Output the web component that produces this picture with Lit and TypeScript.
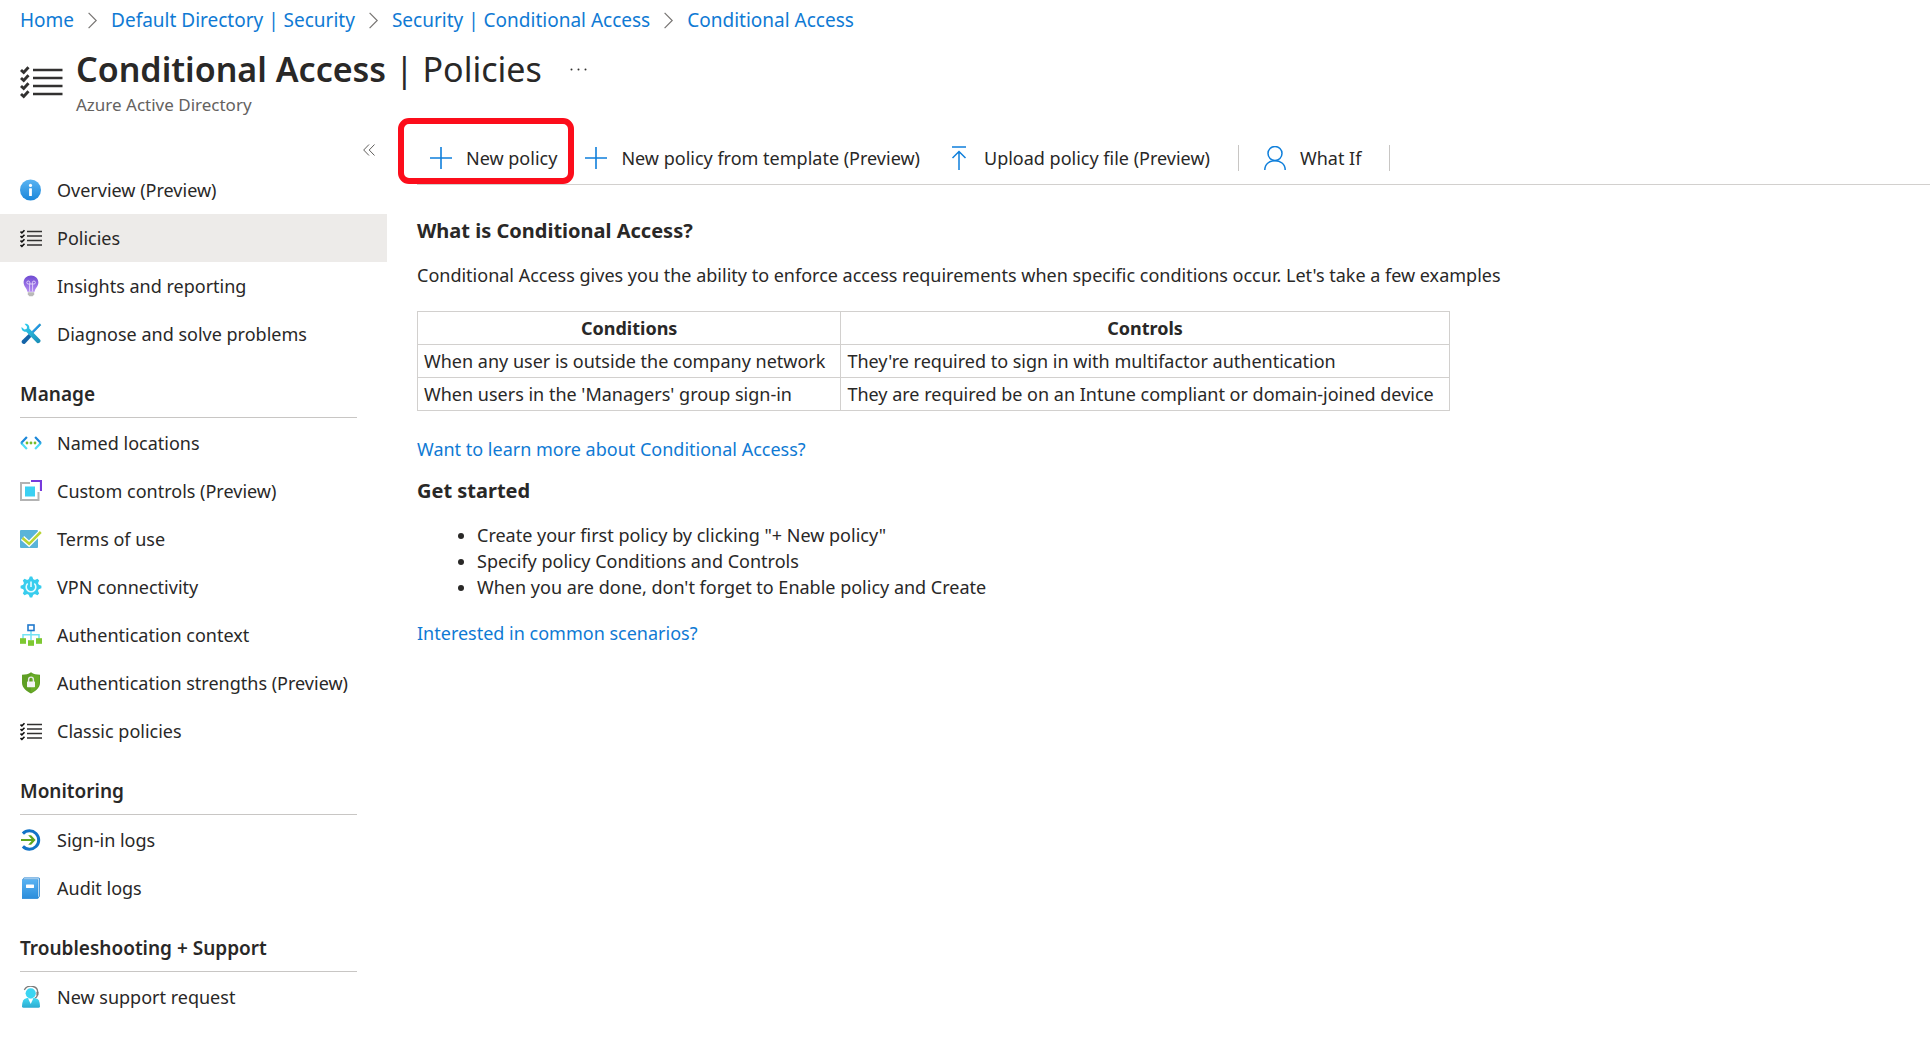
import { LitElement, html, css, svg, nothing, TemplateResult, SVGTemplateResult } from "lit";
import { customElement, property, state } from "lit/decorators.js";

const checklist = svg`
  <path d="M7 4.500H22M7 9H22M7 13.500H22M7 18H22" stroke="#323130" stroke-width="1.500" fill="none" />
  <path d="M.5 4.500 1.900 5.800 4.500 3.200M.5 9 1.900 10.300 4.500 7.700M.5 13.500 1.900 14.800 4.500 12.200M.5 18 1.900 19.300 4.500 16.700" stroke="#111" stroke-width="1.600" fill="none" />`;

/* All navigation glyphs share a 22 x 22 grid. */
const icons: Record<string, SVGTemplateResult> = {
  info: svg`
    <defs><linearGradient id="g" x2="0" y2="1"><stop offset="0" stop-color="#5ab4f2" /><stop offset="1" stop-color="#1a86da" /></linearGradient></defs>
    <circle cx="10.5" cy="11" r="10.5" fill="url(#g)" />
    <circle cx="10.5" cy="6.4" r="1.6" fill="#fff" />
    <rect x="9.1" y="9.2" width="2.8" height="7.8" rx=".6" fill="#fff" />`,
  checklist,
  bulb: svg`
    <defs><linearGradient id="g" x2="0" y2="1"><stop offset="0" stop-color="#6f4bd2" /><stop offset="1" stop-color="#b48af2" /></linearGradient></defs>
    <path d="M11 .6c4.200 0 7.400 3.100 7.400 7 0 3.900-3.300 5.600-3.800 9.200H7.400C6.900 13.200 3.600 11.500 3.600 7.600c0-3.900 3.200-7 7.400-7z" fill="url(#g)" />
    <path d="M9.600 16.500V9H8.300a1.500 1.500 0 1 1 1.500-1.500V9h2.600V7.500A1.500 1.500 0 1 1 13.900 9h-1.300v7.500" fill="none" stroke="#e6d9fb" stroke-width=".9" />
    <path d="M7.800 17.200h6.400v2.300l-1.500 1.700H9.300l-1.500-1.700z" fill="#b9b9b9" />`,
  tools: svg`
    <defs><linearGradient id="g" x2="1" y2="1"><stop offset="0" stop-color="#32d4f5" /><stop offset="1" stop-color="#198ab3" /></linearGradient></defs>
    <path d="M20.300 1.200 19.600.8 11.500 8.900l1.400 1.400 7.900-8.100z" fill="#1b93eb" stroke="#1f8fb5" stroke-width=".6" />
    <path d="m8.700 11 2.700 2.700-6.200 6.800c-1.900 1.600-4.700-.900-3.200-3z" fill="#1464a8" />
    <path d="M4.600 1c2.600-.7 5.200 1.600 4.700 4.500L20.200 16.800c1.300 1.500-1.200 4.400-3.100 3.100L6.200 8.800C3.200 9.200 1 6.700 1.600 4.100l2.800 2.500 2.200-.6.500-2.200z" fill="url(#g)" />`,
  locations: svg`
    <path d="M6.900 5 1.200 11M15.100 5l5.700 6" fill="none" stroke="#1b87d9" stroke-width="2.200" />
    <path d="m1.200 11 5.700 6M20.800 11l-5.700 6" fill="none" stroke="#4fdcf5" stroke-width="2.200" />
    <path d="m.4 11 1.300-1.400L3 11l-1.300 1.400zM21.600 11l-1.300-1.400L19 11l1.300 1.400z" fill="#2ea5e4" />
    <g fill="#76bc2d"><circle cx="7" cy="11" r="1.400" /><circle cx="11" cy="11" r="1.400" /><circle cx="15" cy="11" r="1.400" /></g>`,
  custom: svg`
    <path d="M10 3H1v17h17.500v-8" fill="none" stroke="#b3b3b3" stroke-width="2" />
    <path d="M11 1h10v10" fill="none" stroke="#773adc" stroke-width="2.200" />
    <rect x="5" y="6.500" width="10" height="10" fill="#3bd0f2" />`,
  terms: svg`
    <rect y="2" width="18" height="18" rx="1" fill="#59b4d9" />
    <path d="m2.500 10 6.600 5.800L20.800 4" fill="none" stroke="#fff" stroke-width="5" />
    <path d="m2.500 10 6.600 5.800L20.800 4" fill="none" stroke="#b8d432" stroke-width="2.500" />`,
  gear: svg`
    <g fill="#38cdee">
      <circle cx="11" cy="11" r="8" />
      <path d="m8.500 4 1.300-3.400h2.400L13.500 4zM8.500 18l1.300 3.400h2.400l1.300-3.400zM4 8.500.6 9.800v2.400L4 13.500zM18 8.500l3.400 1.300v2.400L18 13.500z" />
      <path d="M4.300 7.800 2.800 4.500l1.700-1.700 3.300 1.500zM17.700 7.800l1.500-3.300-1.700-1.700-3.300 1.500zM4.300 14.200l-1.500 3.300 1.700 1.700 3.300-1.500zM17.700 14.200l1.500 3.300-1.700 1.700-3.300-1.500z" />
    </g>
    <path d="M7.700 7.500a4.800 4.800 0 1 0 6.600 0M11 5.500V11" fill="none" stroke="#e8fbff" stroke-width="1.600" />`,
  context: svg`
    <path d="M11 7v9M3 15v-4.300h16V15" fill="none" stroke="#73e3f4" stroke-width="1.500" />
    <rect x="8" y="1" width="6" height="5.500" fill="#fff" stroke="#2078cc" stroke-width="1.600" />
    <g fill="#7dc832"><rect y="14.200" width="6" height="5.600" /><rect x="8" y="16.200" width="6" height="5.600" /><rect x="16" y="14.200" width="6" height="5.600" /></g>`,
  shield: svg`
    <path d="M11 .3c2.600 1.900 5.200 2.300 9 2.400v8.400c0 5.200-5.300 8.600-9 10.500-3.700-1.900-9-5.300-9-10.500V2.700C5.800 2.600 8.400 2.200 11 .3z" fill="#5f9f24" />
    <path d="M11 1.500c2.400 1.500 4.900 2 8 2.100v7.300c0 4.600-4.600 7.800-8 9.500z" fill="#76bc2d" fill-opacity=".45" />
    <path d="M8.600 10V7.700a2.400 2.600 0 0 1 4.800 0V10" fill="none" stroke="#e8e8e8" stroke-width="1.400" />
    <rect x="7" y="9.500" width="8" height="5.700" rx=".6" fill="#f4f4f4" />`,
  signin: svg`
    <path d="M2.900 4.600A9.200 9.200 0 1 1 2.900 17.400" fill="none" stroke="#1273c7" stroke-width="3" />
    <path d="M1 11h12" fill="none" stroke="#5ea520" stroke-width="2" />
    <path d="M8.200 6.200h2.900l4.500 4.800-4.500 4.800H8.200l4.300-4.800z" fill="#5ea520" />`,
  book: svg`
    <defs><linearGradient id="g" x2="0" y2="1"><stop offset="0" stop-color="#58b2f2" /><stop offset="1" stop-color="#2b8ddb" /></linearGradient></defs>
    <path d="M2 3 4 .5h14.500q1.500 0 1.500 1.500v17l-2 2.700H2z" fill="#1e7fd0" />
    <path d="M3 2.600 4.200 1.300h14.300q.8 0 .8.800V19l-1.200 1.200V2.600z" fill="#c4e1f6" />
    <path d="M2 2.700h14.800q1 0 1 1v16.900q0 1-1 1H2z" fill="url(#g)" />
    <rect x="6" y="7.500" width="8" height="3.500" rx=".4" fill="#fff" />`,
  support: svg`
    <defs><linearGradient id="g" x2="0" y2="1"><stop offset="0" stop-color="#40d9f3" /><stop offset="1" stop-color="#2caad0" /></linearGradient></defs>
    <path d="M4.300 3.800C8-2.300 18-.2 17.600 6.200c0 3-.2 5.300-2.800 5.900" fill="none" stroke="#7b7b7b" stroke-width="1.300" />
    <rect x="16.500" y="5.500" width="2" height="4" rx=".8" fill="#7b7b7b" />
    <path d="M7 12h7.500l3.100 1c1.800 1 2.300 4.300 2.400 7.500q-.2 1.300-1.500 1.300h-15Q2.200 21.800 2 20.500c.1-3.200.7-6.500 2.500-7.500z" fill="url(#g)" />
    <path d="M8 12.200h5.400L10.700 18z" fill="#fff" />
    <circle cx="10.700" cy="7.300" r="5.100" fill="#3bd5f2" />`,
};

const commandIcons: Record<string, SVGTemplateResult> = {
  plus: svg`<path d="M0 12h22M11 1v22" stroke-width="1.600" />`,
  upload: svg`<path d="M4 1h14M11 24V5.500M4.500 12 11 5.500l6.500 6.500" stroke-width="1.500" />`,
  person: svg`<circle cx="11" cy="7.500" r="7" stroke-width="1.500" /><path d="M.8 24c0-12.400 20.400-12.400 20.400 0" stroke-width="1.500" />`,
};

interface NavEntry { label: string; icon: string; }
interface NavGroup { title?: string; items: NavEntry[]; }

const navigation: NavGroup[] = [
  {
    items: [
      { label: "Overview (Preview)", icon: "info" },
      { label: "Policies", icon: "checklist" },
      { label: "Insights and reporting", icon: "bulb" },
      { label: "Diagnose and solve problems", icon: "tools" },
    ],
  },
  {
    title: "Manage",
    items: [
      { label: "Named locations", icon: "locations" },
      { label: "Custom controls (Preview)", icon: "custom" },
      { label: "Terms of use", icon: "terms" },
      { label: "VPN connectivity", icon: "gear" },
      { label: "Authentication context", icon: "context" },
      { label: "Authentication strengths (Preview)", icon: "shield" },
      { label: "Classic policies", icon: "checklist" },
    ],
  },
  {
    title: "Monitoring",
    items: [
      { label: "Sign-in logs", icon: "signin" },
      { label: "Audit logs", icon: "book" },
    ],
  },
  {
    title: "Troubleshooting + Support",
    items: [{ label: "New support request", icon: "support" }],
  },
];

/* One element per glyph, so that gradient ids stay local to its shadow root. */
@customElement("nav-icon")
export class NavIcon extends LitElement {
  @property() name = "";
  static styles = css`
    :host { display: block; flex: none; width: 22px; height: 22px; }
    svg { display: block; }
  `;
  render() {
    return html`<svg width="22" height="22" viewBox="0 0 22 22" aria-hidden="true">${icons[this.name]}</svg>`;
  }
}

@customElement("side-nav")
export class SideNav extends LitElement {
  @state() private selected = "Policies";
  static styles = css`
    :host { display: block; flex: none; width: 387px; }
    .collapse-row { display: flex; justify-content: flex-end; box-sizing: border-box; padding: 12px 8px 0 0; height: 38px; }
    .collapse { display: grid; place-items: center; width: 20px; height: 20px; padding: 0; border: 0; background: none; }
    ul { list-style: none; margin: 0; padding: 0; }
    .item { display: flex; align-items: center; gap: 15px; height: 48px; padding-left: 20px; color: inherit; text-decoration: none; white-space: nowrap; }
    .selected { background: #edebe9; }
    .heading { margin: 0 30px 1px 20px; padding: 22px 0 8px; border-bottom: 1px solid #c8c6c4; font-size: 19px; font-weight: 600; line-height: 29px; }
  `;
  private select(event: Event, label: string) {
    event.preventDefault();
    this.selected = label;
  }
  private entry(item: NavEntry): TemplateResult {
    const current = item.label === this.selected;
    return html`<li>
      <a class="item ${current ? "selected" : ""}" href="#" aria-current=${current ? "page" : nothing}
        @click=${(e: Event) => this.select(e, item.label)}>
        <nav-icon name=${item.icon}></nav-icon><span>${item.label}</span>
      </a>
    </li>`;
  }
  render() {
    return html`
      <div class="collapse-row">
        <button class="collapse" aria-label="Collapse menu">
          <svg width="12" height="12" viewBox="0 0 12 12" fill="none" stroke="#605e5c"><path d="M6 .5.700 6 6 11.500M11.500.5 6.200 6l5.300 5.500" /></svg>
        </button>
      </div>
      <nav>
        ${navigation.map((group) => html`
          ${group.title ? html`<h2 class="heading">${group.title}</h2>` : nothing}
          <ul>${group.items.map((item) => this.entry(item))}</ul>`)}
      </nav>`;
  }
}

@customElement("command-bar")
export class CommandBar extends LitElement {
  static styles = css`
    :host { display: flex; align-items: center; box-sizing: border-box; height: 57px; padding: 4px 0 0 13px; border-bottom: 1px solid #d2d0ce; }
    .command { position: relative; display: flex; align-items: center; gap: 14px; height: 40px; margin-right: 28px; padding: 0; border: 0; background: none; color: inherit; font: inherit; white-space: nowrap; }
    .command svg { fill: none; stroke: #0f7fdb; }
    .marked::after { content: ""; position: absolute; inset: -20px -17px -6px -32px; border: 6px solid #fc0d1b; border-radius: 11px; pointer-events: none; }
    .divider { width: 1px; height: 26px; margin-right: 25px; background: #c8c6c4; }
  `;
  private command(label: string, icon: string, marked = false) {
    return html`<button class="command ${marked ? "marked" : ""}">
      <svg width="22" height="24" viewBox="0 0 22 24" aria-hidden="true">${commandIcons[icon]}</svg>${label}
    </button>`;
  }
  render() {
    return html`
      ${this.command("New policy", "plus", true)}
      ${this.command("New policy from template (Preview)", "plus")}
      ${this.command("Upload policy file (Preview)", "upload")}
      <span class="divider"></span>
      ${this.command("What If", "person")}
      <span class="divider"></span>`;
  }
}

@customElement("app-root")
export class AppRoot extends LitElement {
  static styles = css`
    :host { display: block; min-height: 100vh; background: #fff; color: #292827; font: 18px/26px "Noto Sans", "Open Sans", sans-serif; }
    a { color: #0f7ad4; text-decoration: none; }
    .crumbs { display: flex; align-items: center; gap: 14px; height: 40px; padding: 0 20px; font-size: 19px; white-space: nowrap; }
    .header { display: flex; align-items: flex-start; padding: 4px 20px 0; height: 84px; gap: 13px; box-sizing: border-box; }
    .header-icon { flex: none; margin-top: 17px; }
    .title-row { display: flex; align-items: center; gap: 28px; }
    h1 { margin: 0; font-size: 34px; font-weight: 400; line-height: 50px; white-space: nowrap; }
    h1 strong { font-weight: 600; }
    .more { display: flex; padding: 0; border: 0; background: none; }
    .subtitle { margin: 0; color: #646260; font-size: 17px; line-height: 22px; }
    .body { display: flex; margin-top: 4px; }
    main { flex: 1; min-width: 0; padding-left: 30px; }
    article { padding: 32px 20px 0 0; }
    h2 { margin: 0; font-size: 20px; font-weight: 700; line-height: 28px; }
    .intro { margin: 17px 0 23px; }
    table { border-collapse: collapse; }
    th, td { padding: 3px 6px; border: 1px solid #d2d0ce; text-align: left; white-space: nowrap; }
    td { padding-right: 15px; }
    th { text-align: center; font-weight: 700; }
    .more-link { margin: 25px 0 15px; }
    ul { margin: 17px 0 20px; padding-left: 60px; }
    p { margin: 0; }
  `;
  render() {
    const chevron = html`<svg width="9" height="17" viewBox="0 0 9 17" fill="none" stroke="#767472" stroke-width="1.200" aria-hidden="true"><path d="m.600.800 7.600 7.700-7.600 7.700" /></svg>`;
    return html`
      <nav class="crumbs" aria-label="Breadcrumb">
        <a href="#">Home</a>${chevron}
        <a href="#">Default Directory | Security</a>${chevron}
        <a href="#">Security | Conditional Access</a>${chevron}
        <a href="#">Conditional Access</a>
      </nav>
      <header class="header">
        <svg class="header-icon" width="43" height="43" viewBox="0 0 43 43" fill="none" stroke="#323130" aria-hidden="true">
          <path d="M13 9h29.500M13 17h29.500M13 25h29.500M13 33h29.500" stroke-width="2.700" />
          <path d="m1 9 2.700 2.500L8.500 6.300M1 17l2.700 2.500 4.800-5.200M1 25l2.700 2.500 4.800-5.200M1 33l2.700 2.500 4.800-5.200" stroke-width="2.900" />
        </svg>
        <div>
          <div class="title-row">
            <h1><strong>Conditional Access</strong> | Policies</h1>
            <button class="more" aria-label="More actions">
              <svg width="17" height="3" viewBox="0 0 17 3" fill="#323130"><circle cx="1.500" cy="1.500" r="1" /><circle cx="8.500" cy="1.500" r="1" /><circle cx="15.500" cy="1.500" r="1" /></svg>
            </button>
          </div>
          <p class="subtitle">Azure Active Directory</p>
        </div>
      </header>
      <div class="body">
        <side-nav></side-nav>
        <main>
          <command-bar></command-bar>
          <article>
            <h2>What is Conditional Access?</h2>
            <p class="intro">Conditional Access gives you the ability to enforce access requirements when specific conditions occur. Let's take a few examples</p>
            <table>
              <thead><tr><th scope="col">Conditions</th><th scope="col">Controls</th></tr></thead>
              <tbody>
                <tr><td>When any user is outside the company network</td><td>They're required to sign in with multifactor authentication</td></tr>
                <tr><td>When users in the 'Managers' group sign-in</td><td>They are required be on an Intune compliant or domain-joined device</td></tr>
              </tbody>
            </table>
            <p class="more-link"><a href="#">Want to learn more about Conditional Access?</a></p>
            <h2>Get started</h2>
            <ul>
              <li>Create your first policy by clicking "+ New policy"</li>
              <li>Specify policy Conditions and Controls</li>
              <li>When you are done, don't forget to Enable policy and Create</li>
            </ul>
            <p><a href="#">Interested in common scenarios?</a></p>
          </article>
        </main>
      </div>`;
  }
}
